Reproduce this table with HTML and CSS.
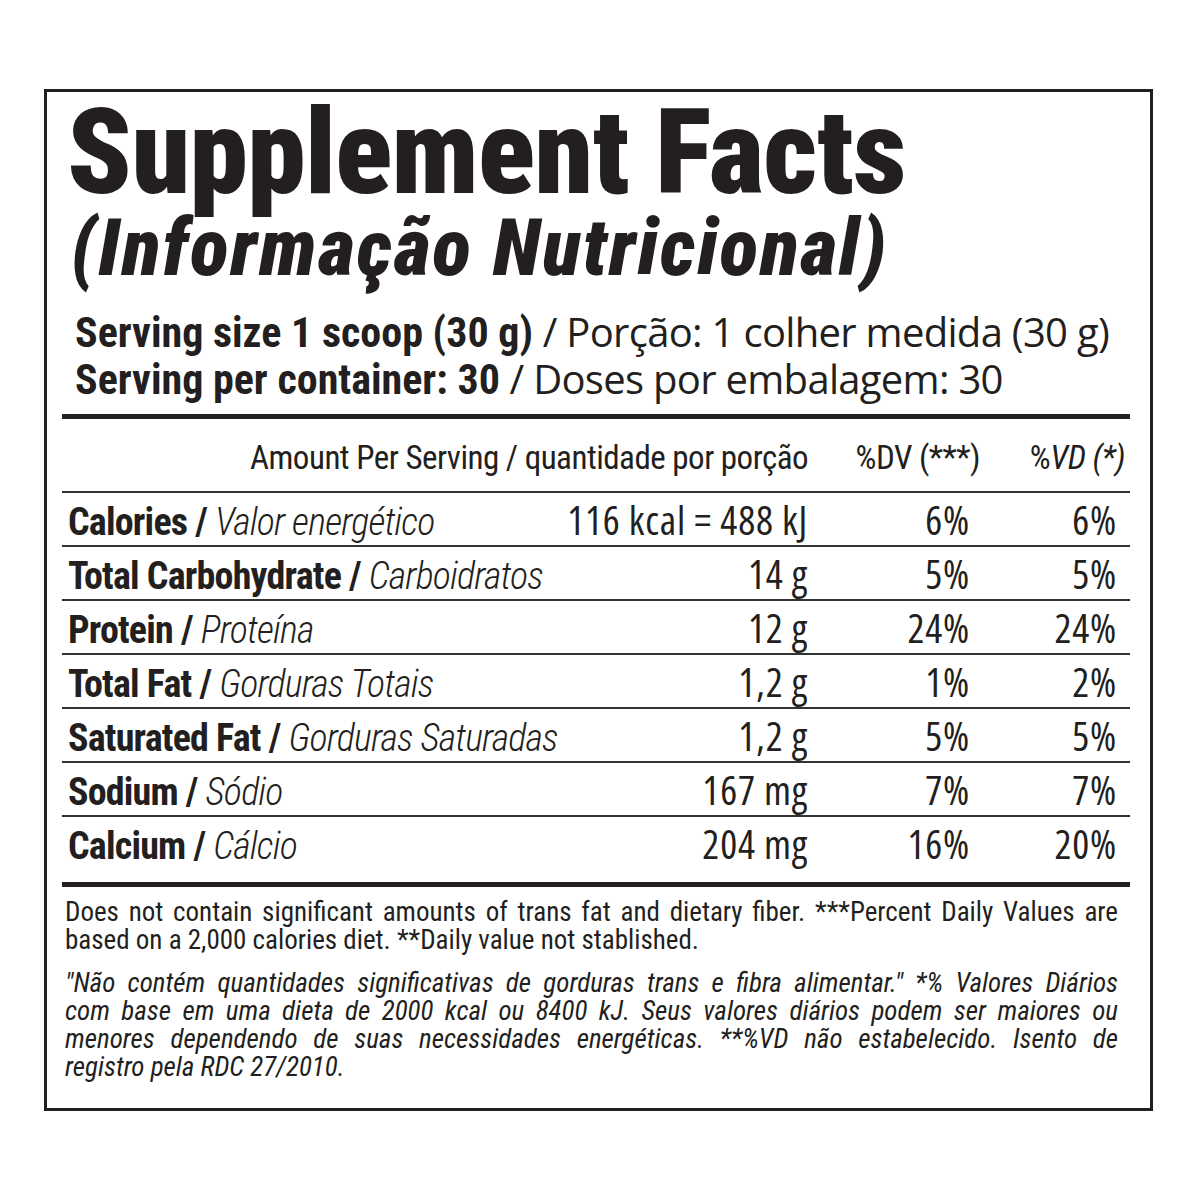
FILE: index.html
```html
<!DOCTYPE html>
<html lang="pt">
<head>
    <meta charset="UTF-8">
    <meta name="viewport" content="width=device-width, initial-scale=1.0">
    <title>Supplement Facts</title>
    <link rel="stylesheet" href="styles.css">
</head>
<body>
    <div class="label">
        <h1 class="title">Supplement Facts</h1>
        <h2 class="subtitle">(Informação Nutricional)</h2>

        <div class="serving">
            <p><b>Serving size 1 scoop (30 g)</b> <span class="pt">/ Porção: 1 colher medida (30 g)</span></p>
            <p><b>Serving per container: 30</b> <span class="pt">/ Doses por embalagem: 30</span></p>
        </div>

        <div class="facts">
            <div class="row head">
                <span class="amount">Amount Per Serving / quantidade por porção</span>
                <span class="pct dv">%DV (***)</span>
                <span class="pct vd">%<i>VD (*)</i></span>
            </div>
            <div class="row">
                <span class="name"><b>Calories /</b> <i>Valor energético</i></span>
                <span class="val">116 kcal = 488 kJ</span>
                <span class="pct num">6%</span>
                <span class="pct num">6%</span>
            </div>
            <div class="row">
                <span class="name"><b>Total Carbohydrate /</b> <i>Carboidratos</i></span>
                <span class="val">14 g</span>
                <span class="pct num">5%</span>
                <span class="pct num">5%</span>
            </div>
            <div class="row">
                <span class="name"><b>Protein /</b> <i>Proteína</i></span>
                <span class="val">12 g</span>
                <span class="pct num">24%</span>
                <span class="pct num">24%</span>
            </div>
            <div class="row">
                <span class="name"><b>Total Fat /</b> <i>Gorduras Totais</i></span>
                <span class="val">1,2 g</span>
                <span class="pct num">1%</span>
                <span class="pct num">2%</span>
            </div>
            <div class="row">
                <span class="name"><b>Saturated Fat /</b> <i>Gorduras Saturadas</i></span>
                <span class="val">1,2 g</span>
                <span class="pct num">5%</span>
                <span class="pct num">5%</span>
            </div>
            <div class="row">
                <span class="name"><b>Sodium /</b> <i>Sódio</i></span>
                <span class="val">167 mg</span>
                <span class="pct num">7%</span>
                <span class="pct num">7%</span>
            </div>
            <div class="row last">
                <span class="name"><b>Calcium /</b> <i>Cálcio</i></span>
                <span class="val">204 mg</span>
                <span class="pct num">16%</span>
                <span class="pct num">20%</span>
            </div>
        </div>

        <div class="notes">
            <p>
                <span class="line">Does not contain significant amounts of trans fat and dietary fiber. ***Percent Daily Values are</span>
                <span class="line end">based on a 2,000 calories diet. **Daily value not stablished.</span>
            </p>
            <p class="pt-note">
                <span class="line">"Não contém quantidades significativas de gorduras trans e fibra alimentar." *% Valores Diários</span>
                <span class="line">com base em uma dieta de 2000 kcal ou 8400 kJ. Seus valores diários podem ser maiores ou</span>
                <span class="line">menores dependendo de suas necessidades energéticas. **%VD não estabelecido. Isento de</span>
                <span class="line end">registro pela RDC 27/2010.</span>
            </p>
        </div>
    </div>
</body>
</html>
```
FILE: styles.css
```css
body {
    margin: 0;
    background-color: #fff;
    color: #231f20;
    font-family: "Roboto", "Liberation Sans", sans-serif;
    font-stretch: 75%;
}

.label {
    box-sizing: border-box;
    width: 1109px;
    margin: 89px 0 0 44px;
    border: 3px solid #231f20;
    padding: 0 20px 27px 15px;
}

.title {
    margin: 6px 0 0;
    padding-left: 5px;
    font-size: 118px;
    line-height: 110px;
    font-weight: 900;
    letter-spacing: -0.6px;
}

.subtitle {
    margin: 0;
    padding-left: 9px;
    font-size: 80px;
    line-height: 80px;
    font-weight: 900;
    font-style: italic;
    letter-spacing: 2px;
}

.serving {
    margin-top: 21px;
    padding-left: 13px;
    padding-bottom: 11px;
    border-bottom: 5px solid #231f20;
    font-size: 42px;
    line-height: 46px;
}
.serving p {
    margin: 0;
    white-space: nowrap;
}
.serving b {
    font-weight: 700;
}
.pt {
    font-family: "Open Sans", sans-serif;
    font-size: 40px;
    font-stretch: 100%;
    font-weight: 400;
    letter-spacing: -0.7px;
}

/* table of amounts */
.facts {
    border-bottom: 5px solid #231f20;
}
.row {
    display: grid;
    grid-template-columns: minmax(0, 1fr) 260px 162px 147px;
    align-items: baseline;
    box-sizing: border-box;
    height: 54px;
    padding: 2px 13px 0 6px;
    border-bottom: 2px solid #333;
    font-size: 38px;
    line-height: 50px;
    white-space: nowrap;
}
.row.head {
    height: 74px;
    padding-top: 19px;
    font-size: 33px;
    line-height: 40px;
    letter-spacing: -0.5px;
}
.row.last {
    height: 65px;
    border-bottom: none;
}
.amount {
    grid-column: 1 / 3;
    text-align: right;
}
.head .dv {
    margin-right: -10px;
}
.head .vd {
    margin-right: -8px;
}
.name {
    letter-spacing: -0.8px;
}
.name b {
    font-weight: 700;
}
.name i {
    font-weight: 300;
}
.val,
.pct {
    text-align: right;
}
.val,
.num {
    font-family: "Open Sans", sans-serif;
    font-stretch: 75%;
    font-size: 40px;
    letter-spacing: 0.8px;
}

.notes {
    padding: 11px 12px 0 3px;
    font-size: 27px;
    line-height: 28px;
}
.notes p {
    margin: 0;
}
.notes .pt-note {
    margin-top: 15px;
    font-style: italic;
}
.line {
    display: block;
    text-align: justify;
    text-align-last: justify;
}
.line.end {
    text-align-last: left;
}
```
